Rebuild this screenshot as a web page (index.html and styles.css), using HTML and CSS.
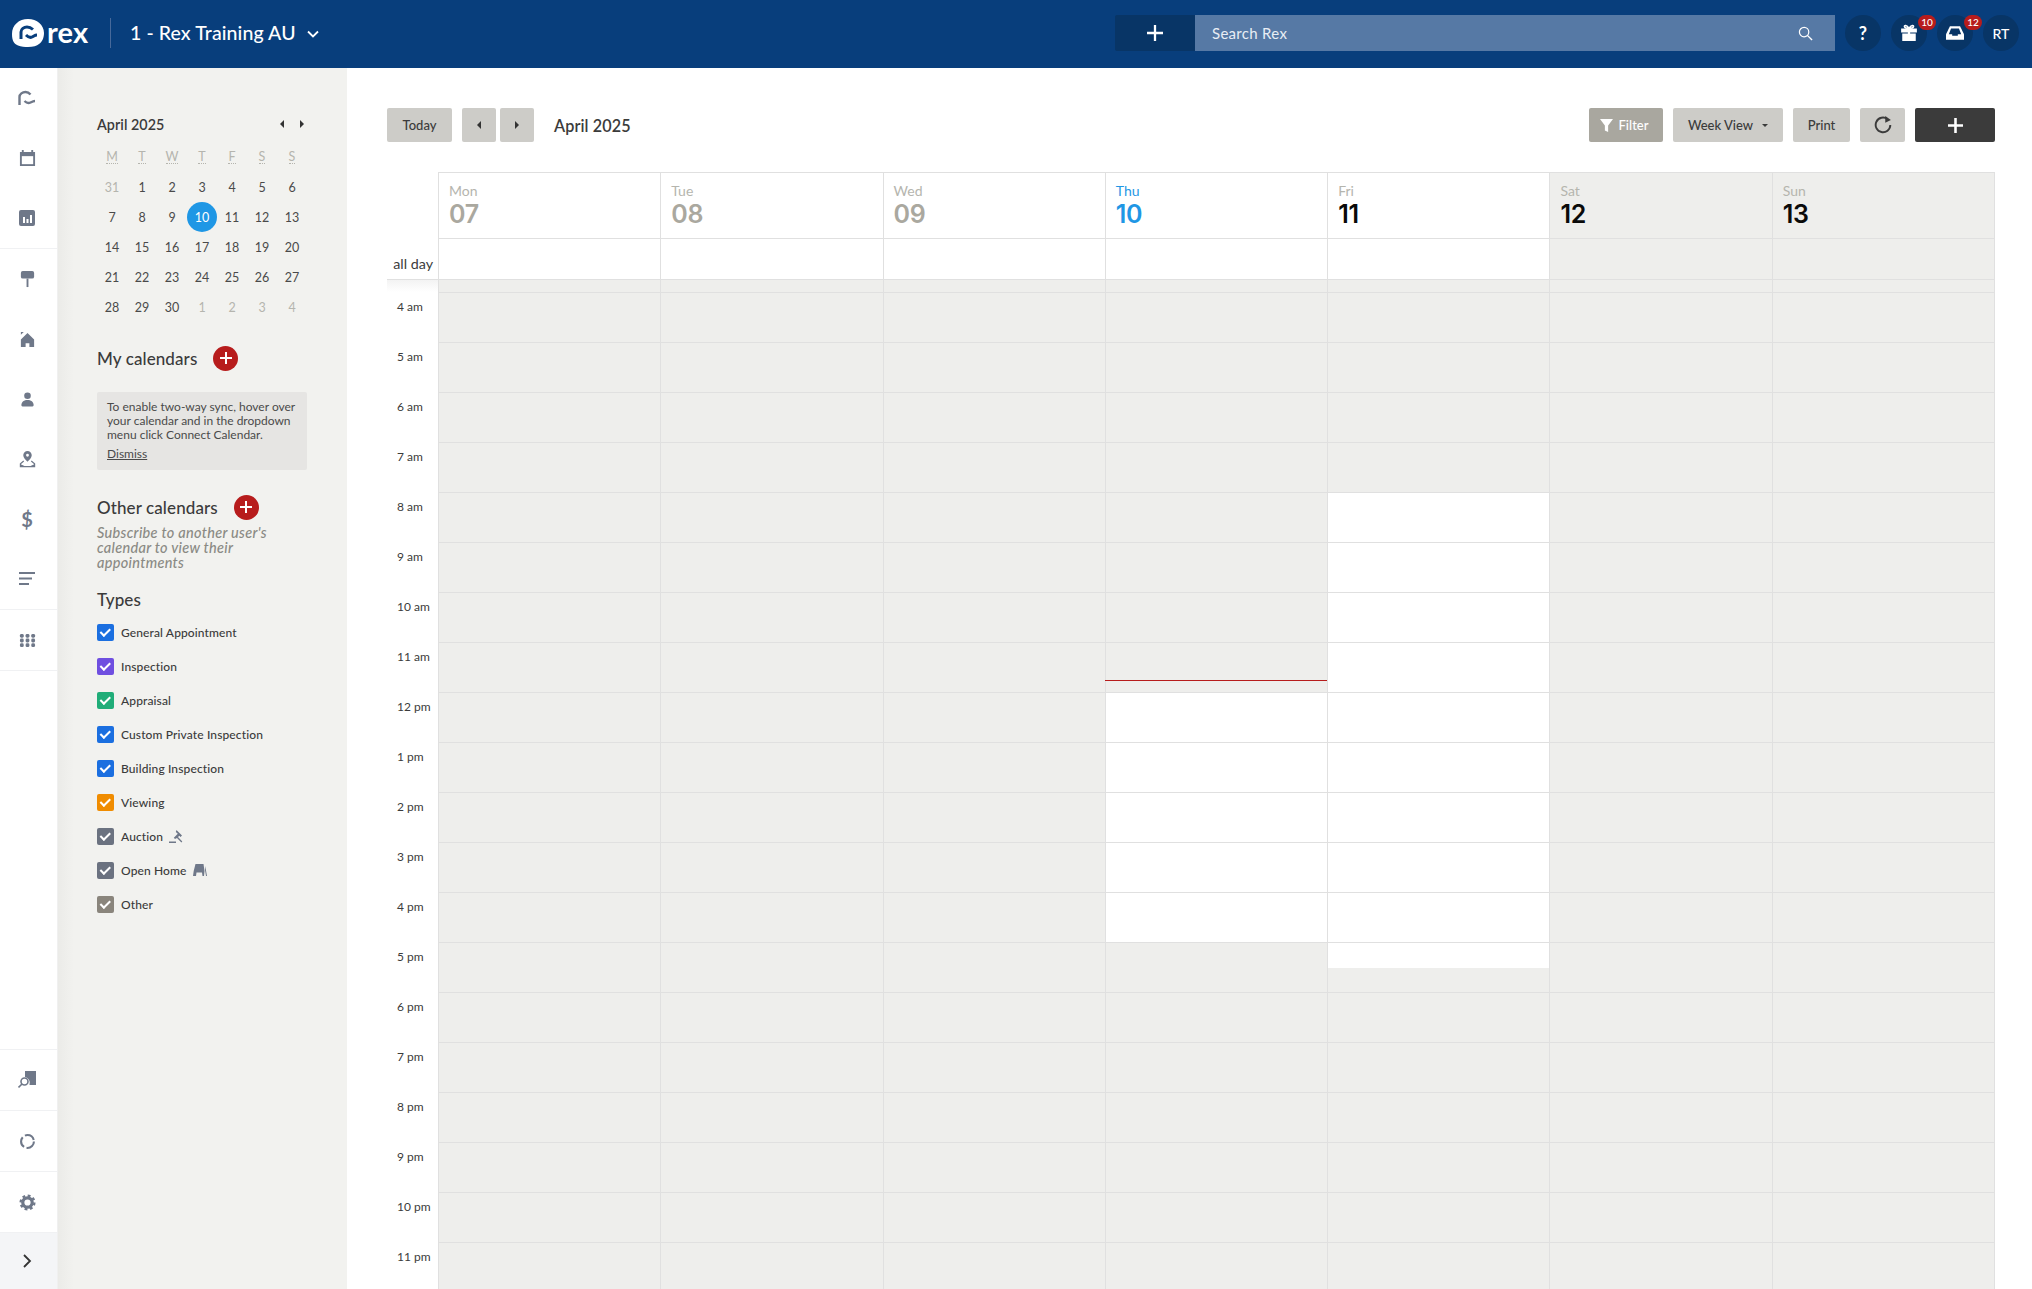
FILE: index.html
```html
<!DOCTYPE html>
<html lang="en">
<head>
<meta charset="utf-8">
<title>Rex Calendar</title>
<link rel="stylesheet" href="styles.css">
</head>
<body>
<header class="topbar">
  <div class="brand">
    <svg class="logo" viewBox="0 0 32 28"><path fill="#fff" d="M16 0c9 0 16 6 16 14 0 5-2 9-5 11-2 2-6 3-11 3-3 0-7-.3-10-1.500C2 25 0 22 0 15 0 6 7 0 16 0z"/><path fill="none" stroke="#083e7c" stroke-width="3" d="M9 20v-7c0-3 3-5 6-5 2 0 4 .7 6 2.500"/><path fill="none" stroke="#083e7c" stroke-width="3" d="M14 16c2 2 4 3 6 2s3-2 5-2"/></svg>
    <span class="logotext">rex</span>
    <span class="brand-sep"></span>
    <span class="account">1 - Rex Training AU</span>
    <svg class="chev" viewBox="0 0 12 8"><path fill="none" stroke="#fff" stroke-width="1.800" d="M1 1.500l5 5 5-5"/></svg>
  </div>
  <div class="searchwrap">
    <div class="quickadd"><svg viewBox="0 0 14 14"><path stroke="#fff" stroke-width="2" d="M7 0v14M0 7h14"/></svg></div>
    <div class="search"><span>Search Rex</span><svg viewBox="0 0 16 16"><circle cx="6.500" cy="6.500" r="5" fill="none" stroke="#fff" stroke-width="1.300"/><path stroke="#fff" stroke-width="1.500" d="M10 10l5 5"/></svg></div>
  </div>
  <div class="tools">
    <div class="tool"><b>?</b></div>
    <div class="tool"><svg viewBox="0 0 16 16"><path fill="#fff" d="M1 4h14v3.500H1zM2 8.500h5V15H2zM9 8.500h5V15H9zM7 4h2v11H7z"/><path fill="none" stroke="#fff" stroke-width="1.400" d="M8 4C6 .5 3.500 1 4 2.500S7 4 8 4c1 0 3.500 0 4-1.500S10 .5 8 4z"/></svg><span class="badge">10</span></div>
    <div class="tool"><svg viewBox="0 0 16 16"><path fill="#fff" d="M3.500 2h9L16 9v5H0V9z"/><path fill="#083566" d="M4.500 4h7l2 5H10.500v1.500h-5V9h-3z"/></svg><span class="badge">12</span></div>
    <div class="tool"><span>RT</span></div>
  </div>
</header>
<div class="app">
  <nav class="rail">
    <div class="railgroup">
      <div class="railitem"><svg class="big" viewBox="0 0 18 18"><path fill="none" stroke="#6f7889" stroke-width="2.400" d="M1.500 16V8c0-3 3-5 6-5 1.500 0 3.500 .7 5 2.500"/><path fill="none" stroke="#6f7889" stroke-width="2.400" d="M6.500 12c2 2 4 2.500 6 1.500s3-1.500 4.500-1.500"/></svg></div>
      <div class="railitem"><svg viewBox="0 0 18 18"><path fill="#6f7889" d="M3 0h2v2h8V0h2v2h2v15H1V2h2z"/><path fill="#fff" d="M3 6.500h12V15H3z"/></svg></div>
      <div class="railitem"><svg class="big" viewBox="0 0 18 18"><rect x="1" y="1" width="16" height="16" rx="2" fill="#6f7889"/><path fill="#fff" d="M5 8h2v6H5zM8.500 10h2v4h-2zM12 6h2v8h-2z"/></svg></div>
    </div>
    <div class="railgroup">
      <div class="railitem"><svg viewBox="0 0 18 18"><rect x="2" y="0" width="14" height="8" rx="2" fill="#6f7889"/><path fill="#6f7889" d="M8 8h2v9H8z"/></svg></div>
      <div class="railitem"><svg viewBox="0 0 18 18"><path fill="#6f7889" d="M9 2l7 7v8h-5v-4H7v4H2V9z"/><path fill="#6f7889" d="M2 1h3L2 4z"/></svg></div>
      <div class="railitem"><svg viewBox="0 0 18 18"><circle cx="9" cy="5" r="3.500" fill="#6f7889"/><path fill="#6f7889" d="M2.500 15c0-3.500 3-5.500 6.500-5.500s6.500 2 6.500 5.500c0 1-1 1.500-2 1.500h-9c-1 0-2-.5-2-1.500z"/></svg></div>
      <div class="railitem"><svg viewBox="0 0 18 18"><path fill="#6f7889" fill-rule="evenodd" d="M9 0a4.500 4.500 0 0 1 4.500 4.500C13.500 7 11 9.500 9 11.500 7 9.500 4.500 7 4.500 4.500A4.500 4.500 0 0 1 9 0zm0 3a1.500 1.500 0 1 0 0 3 1.500 1.500 0 0 0 0-3z"/><path fill="none" stroke="#6f7889" stroke-width="1.300" d="M5 10.500l-3.500 3v3h15v-3l-3.500-3M1.500 14.500l4 2M16.500 14.500l-4 2"/></svg></div>
      <div class="railitem"><span class="dollar">$</span></div>
      <div class="railitem"><svg class="big" viewBox="0 0 18 18"><path fill="#6f7889" d="M1 2h16v2H1zM1 7.500h13v2H1zM1 13h10v2H1z"/></svg></div>
    </div>
    <div class="railgroup">
      <div class="railitem"><svg viewBox="0 0 18 18"><g fill="#6f7889"><rect x="1" y="2" width="4" height="4" rx="1.500"/><rect x="7" y="2" width="4" height="4" rx="1.500"/><rect x="13" y="2" width="4" height="4" rx="1.500"/><rect x="1" y="7" width="4" height="4" rx="1.500"/><rect x="7" y="7" width="4" height="4" rx="1.500"/><rect x="13" y="7" width="4" height="4" rx="1.500"/><rect x="1" y="12" width="4" height="4" rx="1.500"/><rect x="7" y="12" width="4" height="4" rx="1.500"/><rect x="13" y="12" width="4" height="4" rx="1.500"/></g></svg></div>
    </div>
    <div class="railbottom">
      <div class="railitem"><svg class="big" viewBox="0 0 18 18"><path fill="#6f7889" d="M7 0H18v14H11.500A6 6 0 0 0 7 6z"/><circle cx="6.500" cy="10.500" r="3.500" fill="#fff" stroke="#6f7889" stroke-width="1.600"/><path stroke="#6f7889" stroke-width="1.600" d="M4 13l-3.500 3.500"/></svg></div>
      <div class="railitem"><svg viewBox="0 0 18 18"><circle cx="9" cy="9" r="6.800" fill="none" stroke="#6f7889" stroke-width="2.200" stroke-dasharray="11.500 2.700"/></svg></div>
      <div class="railitem"><svg viewBox="0 0 18 18"><circle cx="9" cy="9" r="5" fill="none" stroke="#6f7889" stroke-width="3.400"/><circle cx="9" cy="9" r="7.300" fill="none" stroke="#6f7889" stroke-width="2.400" stroke-dasharray="3 2.730"/></svg></div>
      <div class="railitem railexpand"><svg viewBox="0 0 10 14"><path fill="none" stroke="#333" stroke-width="1.800" d="M2 1l6 6-6 6"/></svg></div>
    </div>
  </nav>
  <aside class="panel">
    <div class="minihead"><span>April 2025</span><div class="miniarrows"><i class="tri left"></i><i class="tri right"></i></div></div>
    <div class="minical">
      <u>M</u><u>T</u><u>W</u><u>T</u><u>F</u><u>S</u><u>S</u>
      <span class="dim">31</span><span>1</span><span>2</span><span>3</span><span>4</span><span>5</span><span>6</span>
      <span>7</span><span>8</span><span>9</span><span class="today">10</span><span>11</span><span>12</span><span>13</span>
      <span>14</span><span>15</span><span>16</span><span>17</span><span>18</span><span>19</span><span>20</span>
      <span>21</span><span>22</span><span>23</span><span>24</span><span>25</span><span>26</span><span>27</span>
      <span>28</span><span>29</span><span>30</span><span class="dim">1</span><span class="dim">2</span><span class="dim">3</span><span class="dim">4</span>
    </div>
    <div class="sect first"><h3>My calendars</h3><span class="addround"><svg viewBox="0 0 12 12"><path stroke="#fff" stroke-width="2" d="M6 0v12M0 6h12"/></svg></span></div>
    <div class="notice">
      <p>To enable two-way sync, hover over your calendar and in the dropdown menu click Connect Calendar.</p>
      <a>Dismiss</a>
    </div>
    <div class="sect other"><h3>Other calendars</h3><span class="addround"><svg viewBox="0 0 12 12"><path stroke="#fff" stroke-width="2" d="M6 0v12M0 6h12"/></svg></span></div>
    <p class="subscribe">Subscribe to another user's calendar to view their appointments</p>
    <h3 class="types">Types</h3>
    <ul class="typelist">
      <li><i class="box blue"></i>General Appointment</li>
      <li><i class="box purple"></i>Inspection</li>
      <li><i class="box green"></i>Appraisal</li>
      <li><i class="box blue"></i>Custom Private Inspection</li>
      <li><i class="box blue"></i>Building Inspection</li>
      <li><i class="box orange"></i>Viewing</li>
      <li><i class="box slate"></i>Auction<svg class="typeicon" viewBox="0 0 14 14"><path fill="#6f7889" d="M7.500 1l5.500 5.500-1.500 1.500-1.200-1.200-1.300 1.300 4.300 4.400-.9.900-4.400-4.300L6 10 4.800 8.800 8.800 4.800 6.800 3zM0 12.500h7V14H0z"/></svg></li>
      <li><i class="box slate"></i>Open Home<svg class="typeicon wide" viewBox="0 0 14 12"><path fill="#6f7889" d="M2.500 0h8l1 7-.5 5H9.500L9 8.500H3.500L3 12H0l.7-5zM12.200 2l1.800 10h-1L12 6z"/></svg></li>
      <li><i class="box taupe"></i>Other</li>
    </ul>
  </aside>
  <main class="main">
    <div class="toolbar">
      <button class="btn today-btn">Today</button>
      <button class="btn nav-btn first-nav"><i class="tri left"></i></button>
      <button class="btn nav-btn"><i class="tri right"></i></button>
      <span class="range">April 2025</span>
      <div class="toolbar-right">
        <button class="btn filter"><svg viewBox="0 0 12 12"><path fill="#fff" d="M0 0h12L7.500 6v6l-3-1.500V6z"/></svg>Filter</button>
        <button class="btn view">Week View<i class="caret"></i></button>
        <button class="btn print">Print</button>
        <button class="btn refresh"><svg viewBox="0 0 16 16"><path fill="none" stroke="#3b3b3b" stroke-width="1.700" d="M12 2.800A6.500 6.500 0 1 0 14.500 8"/><path fill="#3b3b3b" d="M10 0v6l5-2.500z"/></svg></button>
        <button class="btn add"><svg viewBox="0 0 14 14"><path stroke="#fff" stroke-width="2.400" d="M7 0v14M0 7h14"/></svg></button>
      </div>
    </div>
    <div class="week">
      <div class="hc blank"></div>
      <div class="hc"><small>Mon</small><b>07</b></div>
      <div class="hc"><small>Tue</small><b>08</b></div>
      <div class="hc"><small>Wed</small><b>09</b></div>
      <div class="hc now"><small>Thu</small><b>10</b></div>
      <div class="hc next"><small>Fri</small><b>11</b></div>
      <div class="hc next off"><small>Sat</small><b>12</b></div>
      <div class="hc next off"><small>Sun</small><b>13</b></div>

      <div class="lbl allday">all day</div>
      <div class="ad"></div><div class="ad"></div><div class="ad"></div><div class="ad"></div><div class="ad"></div><div class="ad off"></div><div class="ad off"></div>

      <div class="lbl stub"></div>
      <div class="st"></div><div class="st"></div><div class="st"></div><div class="st"></div><div class="st"></div><div class="st"></div><div class="st"></div>

      <div class="lbl">4 am</div><div class="c"></div><div class="c"></div><div class="c"></div><div class="c"></div><div class="c"></div><div class="c"></div><div class="c"></div>
      <div class="lbl">5 am</div><div class="c"></div><div class="c"></div><div class="c"></div><div class="c"></div><div class="c"></div><div class="c"></div><div class="c"></div>
      <div class="lbl">6 am</div><div class="c"></div><div class="c"></div><div class="c"></div><div class="c"></div><div class="c"></div><div class="c"></div><div class="c"></div>
      <div class="lbl">7 am</div><div class="c"></div><div class="c"></div><div class="c"></div><div class="c"></div><div class="c"></div><div class="c"></div><div class="c"></div>
      <div class="lbl">8 am</div><div class="c"></div><div class="c"></div><div class="c"></div><div class="c"></div><div class="c o"></div><div class="c"></div><div class="c"></div>
      <div class="lbl">9 am</div><div class="c"></div><div class="c"></div><div class="c"></div><div class="c"></div><div class="c o"></div><div class="c"></div><div class="c"></div>
      <div class="lbl">10 am</div><div class="c"></div><div class="c"></div><div class="c"></div><div class="c"></div><div class="c o"></div><div class="c"></div><div class="c"></div>
      <div class="lbl">11 am</div><div class="c"></div><div class="c"></div><div class="c"></div><div class="c nowline"><i></i></div><div class="c o"></div><div class="c"></div><div class="c"></div>
      <div class="lbl">12 pm</div><div class="c"></div><div class="c"></div><div class="c"></div><div class="c o"></div><div class="c o"></div><div class="c"></div><div class="c"></div>
      <div class="lbl">1 pm</div><div class="c"></div><div class="c"></div><div class="c"></div><div class="c o"></div><div class="c o"></div><div class="c"></div><div class="c"></div>
      <div class="lbl">2 pm</div><div class="c"></div><div class="c"></div><div class="c"></div><div class="c o"></div><div class="c o"></div><div class="c"></div><div class="c"></div>
      <div class="lbl">3 pm</div><div class="c"></div><div class="c"></div><div class="c"></div><div class="c o"></div><div class="c o"></div><div class="c"></div><div class="c"></div>
      <div class="lbl">4 pm</div><div class="c"></div><div class="c"></div><div class="c"></div><div class="c o"></div><div class="c o"></div><div class="c"></div><div class="c"></div>
      <div class="lbl">5 pm</div><div class="c"></div><div class="c"></div><div class="c"></div><div class="c"></div><div class="c part"></div><div class="c"></div><div class="c"></div>
      <div class="lbl">6 pm</div><div class="c"></div><div class="c"></div><div class="c"></div><div class="c"></div><div class="c"></div><div class="c"></div><div class="c"></div>
      <div class="lbl">7 pm</div><div class="c"></div><div class="c"></div><div class="c"></div><div class="c"></div><div class="c"></div><div class="c"></div><div class="c"></div>
      <div class="lbl">8 pm</div><div class="c"></div><div class="c"></div><div class="c"></div><div class="c"></div><div class="c"></div><div class="c"></div><div class="c"></div>
      <div class="lbl">9 pm</div><div class="c"></div><div class="c"></div><div class="c"></div><div class="c"></div><div class="c"></div><div class="c"></div><div class="c"></div>
      <div class="lbl">10 pm</div><div class="c"></div><div class="c"></div><div class="c"></div><div class="c"></div><div class="c"></div><div class="c"></div><div class="c"></div>
      <div class="lbl">11 pm</div><div class="c"></div><div class="c"></div><div class="c"></div><div class="c"></div><div class="c"></div><div class="c"></div><div class="c"></div>
    </div>
  </main>
</div>
</body>
</html>
```
FILE: styles.css
```css
* { box-sizing: border-box; }
html, body { margin: 0; height: 100%; overflow: hidden; }
body { font-family: "Lato", "Open Sans", sans-serif; color: #3b3b3b; background: #fff; display: flex; flex-direction: column; height: 1289px; }
svg { display: block; }
h3, p, ul { margin: 0; padding: 0; }

.topbar { height: 68px; flex: none; background: #083e7c; display: flex; align-items: center; padding-bottom: 2px; color: #fff; }
.brand { display: flex; align-items: center; padding-left: 12px; width: 1115px; }
.logo { width: 32px; height: 28px; }
.logotext { font-size: 29px; font-weight: 700; line-height: 30px; margin: -3px 0 0 3px; width: 44px; letter-spacing: .2px; }
.brand-sep { width: 1px; height: 30px; background: #47699a; margin: 0 19px 0 19px; }
.account { font-size: 19.500px; font-weight: 500; letter-spacing: .1px; margin-top: -1px; }
.chev { width: 12px; height: 8px; margin-left: 11px; margin-top: 2px; }
.searchwrap { display: flex; height: 36px; width: 720px; }
.quickadd { width: 80px; background: #083566; border-radius: 2px 0 0 2px; display: flex; align-items: center; justify-content: center; }
.quickadd svg { width: 16px; height: 16px; }
.search { flex: 1; background: #5679a5; display: flex; align-items: center; justify-content: space-between; padding: 0 22px 0 17px; font-size: 15px; letter-spacing: .3px; color: #e8edf4; }
.search svg { width: 15px; height: 15px; }
.tools { display: flex; gap: 10px; margin-left: 10px; }
.tool { position: relative; width: 36px; height: 36px; border-radius: 50%; background: #083566; display: flex; align-items: center; justify-content: center; font-size: 14px; font-weight: 500; }
.tool b { font-size: 18px; font-weight: 700; }
.tool svg { width: 18px; height: 18px; }
.badge { position: absolute; top: 0; left: 27px; width: 18px; height: 15px; border-radius: 8px; background: #b71c1c; font-size: 10px; line-height: 15px; text-align: center; color: #fff; }

.app { flex: 1; display: flex; min-height: 0; }
.rail { width: 58px; flex: none; background: #fff; display: flex; flex-direction: column; border-right: 1px solid #f0f0f0; }
.railgroup { border-bottom: 1px solid #f0f1f3; }
.railitem { height: 60px; padding-right: 3px; display: flex; align-items: center; justify-content: center; }
.railitem svg { width: 17px; height: 17px; }
.railitem svg.big { width: 18px; height: 18px; }
.dollar { font-size: 20px; font-weight: 700; color: #6f7889; }
.railbottom { margin-top: auto; }
.railbottom .railitem { height: 61px; border-top: 1px solid #f0f1f3; }
.railbottom .railexpand { height: 57px; background: #f4f5f7; }
.railitem.railexpand svg { width: 10px; height: 14px; }

.panel { width: 289px; flex: none; background: linear-gradient(90deg, #ebebe8, #f2f2ef 16px); padding: 39px 40px 0 39px; }
.minihead { display: flex; justify-content: space-between; align-items: center; height: 34px; padding-right: 3px; font-size: 14.300px; font-weight: 600; letter-spacing: .05px; }
.miniarrows { display: flex; gap: 16px; }
.tri { display: block; width: 0; height: 0; border-top: 4px solid transparent; border-bottom: 4px solid transparent; }
.tri.left { border-right: 4px solid #333; }
.tri.right { border-left: 4px solid #333; }
.minical { display: grid; grid-template-columns: repeat(7, 30px); grid-auto-rows: 30px; margin-top: 1px; font-size: 12.500px; color: #4a4a4a; }
.minical > * { display: flex; align-items: center; justify-content: center; }
.minical u { text-decoration: none; color: #b5b5ae; height: 14px; align-self: center; border-bottom: 1px dotted #b5b5ae; width: fit-content; justify-self: center; line-height: 14px; }
.minical .dim { color: #b5b5ae; }
.minical .today { background: #1f97e5; color: #fff; border-radius: 50%; }
.sect { display: flex; align-items: center; gap: 16px; height: 26px; }
.sect.first { margin-top: 23px; }
.sect.other { margin-top: 24px; }
.sect h3, .types { font-size: 17px; font-weight: 500; letter-spacing: .1px; }
.addround { width: 25px; height: 25px; border-radius: 50%; background: #b71c1c; display: flex; align-items: center; justify-content: center; }
.addround svg { width: 12px; height: 12px; }
.notice { margin-top: 21px; height: 78px; background: #e6e5e3; border-radius: 2px; padding: 8px 10px; font-size: 12px; line-height: 14px; color: #4a4a4a; }
.notice a { display: block; margin-top: 5px; text-decoration: underline; }
.subscribe { margin-top: 5px; max-width: 180px; font-size: 14.500px; line-height: 15px; font-style: italic; font-weight: 500; letter-spacing: .3px; color: #8a8a84; }
.types { margin-top: 19px; line-height: 22px; }
.typelist { list-style: none; margin-top: 4px; }
.typelist li { height: 34px; display: flex; align-items: center; font-size: 12px; font-weight: 500; letter-spacing: .12px; }
.box { width: 17px; height: 17px; border-radius: 2px; margin-right: 7px; display: flex; align-items: center; justify-content: center; }
.box::after { content: ""; width: 8px; height: 4px; border-left: 2px solid #fff; border-bottom: 2px solid #fff; transform: rotate(-45deg) translate(0, -1px); }
.blue { background: #1b6fe0; }
.purple { background: #6f4fe0; }
.green { background: #20ad78; }
.orange { background: #f08c00; }
.slate { background: #6b7280; }
.taupe { background: #8a857c; }
.typeicon { width: 14px; height: 14px; margin-left: 6px; }
.typeicon.wide { width: 14px; height: 12px; }

.main { flex: 1; min-width: 0; padding: 40px 37px 0 40px; overflow: hidden; }
.toolbar { display: flex; align-items: center; height: 34px; margin-bottom: 30px; }
.btn { height: 34px; border: 0; border-radius: 2px; background: #cdccc8; color: #3b3b3b; font: 500 13px "Lato", sans-serif; padding: 0; display: flex; align-items: center; justify-content: center; }
.today-btn { width: 65px; margin-right: 10px; }
.nav-btn { width: 34px; }
.first-nav { margin-right: 4px; }
.range { margin-left: 20px; font-size: 16.200px; font-weight: 600; letter-spacing: .1px; }
.toolbar-right { margin-left: auto; display: flex; gap: 10px; }
.filter { width: 74px; background: #a9a79f; color: #fff; gap: 6px; padding-right: 4px; }
.filter svg { width: 13px; height: 13px; }
.view { width: 110px; gap: 9px; }
.caret { width: 0; height: 0; border: 3px solid transparent; border-top: 3px solid #3b3b3b; border-bottom: 0; }
.print { width: 57px; }
.refresh { width: 45px; }
.refresh svg { width: 18px; height: 18px; }
.add { width: 80px; background: #3b3b3b; }
.add svg { width: 15px; height: 15px; }

.week { display: grid; grid-template-columns: 51px repeat(7, 1fr); grid-template-rows: 66px 41px 13px; grid-auto-rows: 50px; border-right: 1px solid #e0e0e0; }
.hc, .ad, .st, .c { border-left: 1px solid #e0e0e0; border-top: 1px solid #e0e0e0; }
.hc { padding: 9px 10px 0; display: flex; flex-direction: column; }
.hc.blank { border: 0; }
.hc small { font-size: 14px; line-height: 18px; color: #b5b5ae; }
.hc b { font-family: "Inter", "Lato", sans-serif; font-size: 25px; line-height: 28px; font-weight: 600; letter-spacing: -.3px; color: #aaa89f; }
.hc.now small, .hc.now b { color: #1f97e5; }
.hc.next b { color: #0a0a0a; }
.off, .st, .c { background: #eeeeec; }
.c.o { background: #fff; }
.c.part { background: linear-gradient(#fff 25px, #eeeeec 25px); }
.lbl { font-size: 12px; padding: 7px 0 0 10px; color: #3b3b3b; }
.lbl.allday { font-size: 14.300px; text-align: right; padding: 17px 5px 0 0; }
.lbl.stub { border-top: 1px solid #e0e0e0; padding: 0; background: linear-gradient(#f3f3f3, #fff); }
.nowline { position: relative; }
.nowline i { position: absolute; left: -1px; right: 0; top: 37px; height: 1px; background: #b71c1c; }
```
